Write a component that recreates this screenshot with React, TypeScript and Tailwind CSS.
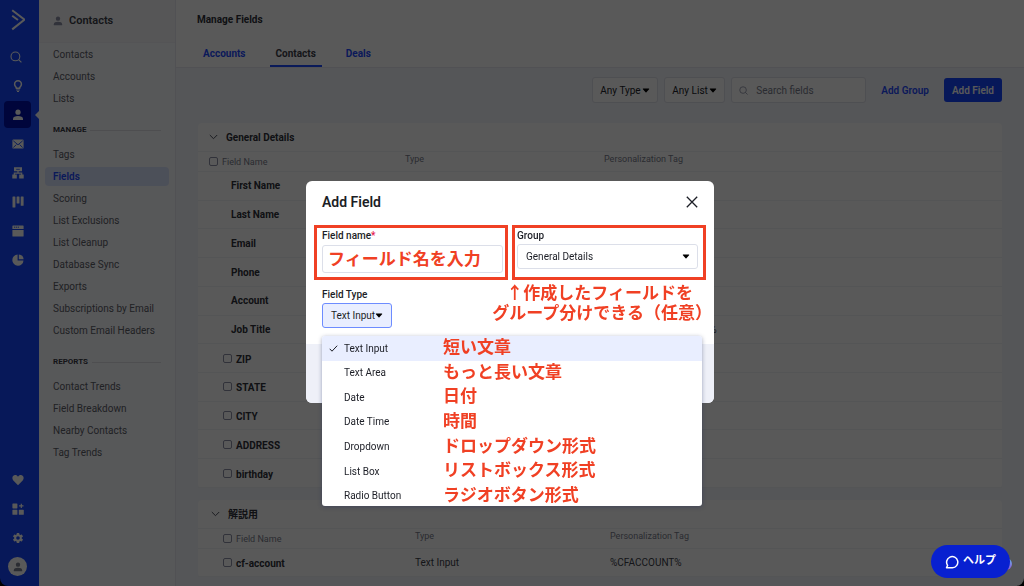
import React from 'react'

const NAV_TOP = ['Contacts', 'Accounts', 'Lists']
const NAV_MANAGE = [
  'Tags',
  'Fields',
  'Scoring',
  'List Exclusions',
  'List Cleanup',
  'Database Sync',
  'Exports',
  'Subscriptions by Email',
  'Custom Email Headers',
]
const NAV_REPORTS = ['Contact Trends', 'Field Breakdown', 'Nearby Contacts', 'Tag Trends']

const TABS = ['Accounts', 'Contacts', 'Deals']

type Field = { name: string; type?: string; tag?: string; fixed?: boolean }

const GENERAL_FIELDS: Field[] = [
  { name: 'First Name', fixed: true },
  { name: 'Last Name', fixed: true },
  { name: 'Email', fixed: true },
  { name: 'Phone', fixed: true },
  { name: 'Account', fixed: true },
  { name: 'Job Title', fixed: true, tag: '%CONTACT_JOB_TITLE%' },
  { name: 'ZIP' },
  { name: 'STATE' },
  { name: 'CITY' },
  { name: 'ADDRESS' },
  { name: 'birthday' },
]

const FIELD_TYPES = [
  { label: 'Text Input', note: '短い文章' },
  { label: 'Text Area', note: 'もっと長い文章' },
  { label: 'Date', note: '日付' },
  { label: 'Date Time', note: '時間' },
  { label: 'Dropdown', note: 'ドロップダウン形式' },
  { label: 'List Box', note: 'リストボックス形式' },
  { label: 'Radio Button', note: 'ラジオボタン形式' },
]

function PersonIcon({ className = 'size-3' }: { className?: string }) {
  return (
    <svg viewBox="0 0 12 12" className={className} fill="currentColor" aria-hidden>
      <circle cx="6" cy="3.2" r="2.6" />
      <path d="M1 11V9.8C1 7.9 3.2 7 6 7s5 .9 5 2.8V11z" />
    </svg>
  )
}

function SearchIcon({ className = 'size-3' }: { className?: string }) {
  return (
    <svg viewBox="0 0 12 12" className={className} fill="none" stroke="currentColor" strokeWidth="1.1" aria-hidden>
      <circle cx="5.4" cy="5.4" r="4.4" />
      <path d="M8.6 8.6 11.4 11.4" />
    </svg>
  )
}

function Caret({ className = '' }: { className?: string }) {
  return (
    <svg viewBox="0 0 8 5" className={`h-[5px] w-2 ${className}`} fill="currentColor" aria-hidden>
      <path d="M1.2.5h5.6a.4.4 0 0 1 .3.7L4.400 4.200a.6.6 0 0 1-.8 0L.9 1.200A.4.4 0 0 1 1.200.5z" />
    </svg>
  )
}

const RAIL_TOP = [
  { name: 'Search', icon: <SearchIcon className="mr-[3px] size-3" /> },
  {
    name: 'Ideas',
    icon: (
      <svg viewBox="0 0 12 12" className="size-3" fill="none" stroke="currentColor" aria-hidden>
        <path d="M4.4 8.2C4.4 7 2.6 6.4 2.6 4.200a3.400 3.400 0 0 1 6.800 0C9.400 6.400 7.600 7 7.600 8.200z" strokeWidth="1.500" />
        <path d="M4.200 10h3.600M5 11.500h2" strokeWidth="1.200" />
      </svg>
    ),
  },
  { name: 'Contacts', icon: <PersonIcon />, active: true },
  {
    name: 'Campaigns',
    icon: (
      <svg viewBox="0 0 12 12" className="size-3" aria-hidden>
        <rect x=".4" y="1.600" width="11.200" height="9" rx="1.200" fill="currentColor" />
        <path d="m1.300 2.800 4.700 4 4.700-4M1.300 9.600l3-3M10.700 9.600l-3-3" fill="none" stroke="#1446ff" strokeWidth=".9" />
      </svg>
    ),
  },
  {
    name: 'Automations',
    icon: (
      <svg viewBox="0 0 12 12" className="size-3" fill="currentColor" aria-hidden>
        <path d="M2 .3h8v4H6.600v1.300h3.700v2h1.400v3.900H7.200V7.600h1.900v-.9H2.900v.9h1.900v3.900H.3V7.600h1.400v-2h3.700V4.300H2z" />
        <path d="M4.200 2.300h3.600" stroke="#1446ff" strokeWidth=".8" />
      </svg>
    ),
  },
  {
    name: 'Deals',
    icon: (
      <svg viewBox="0 0 12 12" className="size-3" fill="currentColor" aria-hidden>
        <rect x=".5" y=".5" width="2.900" height="11" rx=".5" />
        <rect x="4.600" y=".5" width="2.900" height="7" rx=".5" />
        <rect x="8.700" y=".5" width="2.900" height="9.200" rx=".5" />
      </svg>
    ),
  },
  {
    name: 'Website',
    icon: (
      <svg viewBox="0 0 12 12" className="size-3" fill="currentColor" aria-hidden>
        <path d="M1 .4h10a.6.6 0 0 1 .6.6v3H.4V1A.6.6 0 0 1 1 .4zM.4 5h11.200v6a.6.6 0 0 1-.6.6H1a.6.6 0 0 1-.6-.6z" />
        <path d="M2 2.200h5" stroke="#1446ff" strokeWidth=".9" strokeDasharray="1.200 .7" />
      </svg>
    ),
  },
  {
    name: 'Reports',
    icon: (
      <svg viewBox="0 0 12 12" className="size-3" fill="currentColor" aria-hidden>
        <path d="M5.600.5v5.900h5.900A5.600 5.600 0 1 1 5.600.5z" />
        <path d="M6.800.4a5.200 5.200 0 0 1 4.800 4.800H6.800z" />
      </svg>
    ),
  },
]

const RAIL_BOTTOM = [
  {
    name: 'Favorites',
    icon: (
      <svg viewBox="0 0 12 12" className="size-3" fill="currentColor" aria-hidden>
        <path d="M6 11.200 1.300 6.500C-.6 4.300.6 1.100 3.200 1.100c1.200 0 2.200.6 2.800 1.600.6-1 1.600-1.600 2.800-1.600 2.600 0 3.800 3.200 1.900 5.400z" />
      </svg>
    ),
  },
  {
    name: 'Apps',
    icon: (
      <svg viewBox="0 0 12 12" className="size-3" fill="currentColor" aria-hidden>
        <rect x=".4" y=".4" width="5" height="5" rx=".6" />
        <rect x=".4" y="6.800" width="5" height="5" rx=".6" />
        <rect x="6.800" y="6.800" width="5" height="5" rx=".6" />
        <path d="M8.700.7h1.200v1.600h1.600v1.200H9.900v1.600H8.700V3.500H7.100V2.300h1.600z" />
      </svg>
    ),
  },
  {
    name: 'Settings',
    icon: (
      <svg viewBox="0 0 24 24" className="size-3" fill="currentColor" aria-hidden>
        <path d="M19.400 13a7.500 7.500 0 0 0 0-2l2.200-1.700a.5.500 0 0 0 .1-.6l-2-3.500a.5.500 0 0 0-.6-.2l-2.500 1a7.700 7.700 0 0 0-1.700-1L14.500 2.400A.5.500 0 0 0 14 2h-4a.5.500 0 0 0-.5.400L9.100 5a7.700 7.700 0 0 0-1.700 1l-2.500-1a.5.500 0 0 0-.6.200l-2 3.500a.5.500 0 0 0 .1.600L4.600 11a7.500 7.500 0 0 0 0 2l-2.200 1.700a.5.500 0 0 0-.1.600l2 3.500c.1.200.4.300.6.200l2.500-1a7.700 7.700 0 0 0 1.700 1l.4 2.600c0 .2.200.4.500.4h4c.3 0 .5-.2.500-.4l.4-2.600a7.700 7.700 0 0 0 1.700-1l2.500 1c.2.100.5 0 .6-.2l2-3.500a.5.500 0 0 0-.1-.6zM12 15.600a3.600 3.600 0 1 1 0-7.200 3.600 3.600 0 0 1 0 7.200z" />
      </svg>
    ),
  },
]

function Rail() {
  return (
    <nav aria-label="Main" className="flex w-[39px] shrink-0 flex-col items-center bg-[#1446ff] pr-1 pb-[5px] text-white">
      <a href="#" aria-label="Home" className="mt-2 mb-2.5 flex h-6 items-center">
        <svg viewBox="0 0 16 24" className="h-6 w-4" fill="none" stroke="currentColor" strokeWidth="2" aria-hidden>
          <path d="M2.200 2.200 14 11.200V12L2.200 21.400" />
          <path d="M2.200 7.800 8 12" strokeWidth="2" />
        </svg>
      </a>
      {RAIL_TOP.map((item) => (
        <a key={item.name} href="#" aria-label={item.name} className="relative flex h-[29px] w-[35px] items-center justify-center">
          <span className={`flex size-[27px] items-center justify-center rounded ${item.active ? 'bg-[#0010a8]' : ''}`}>
            {item.icon}
          </span>
          {item.active && (
            <svg viewBox="0 0 4 8" className="absolute -right-1 h-2 w-1 fill-[#f7f8fb]" aria-hidden>
              <path d="M4 0v8L0 4z" />
            </svg>
          )}
        </a>
      ))}
      <div className="mt-auto">
        {RAIL_BOTTOM.map((item) => (
          <a key={item.name} href="#" aria-label={item.name} className="flex h-[29px] items-center justify-center">
            {item.icon}
          </a>
        ))}
        <a href="#" aria-label="Profile" className="flex h-[29px] items-center justify-center">
          <span className="flex size-[19px] items-center justify-center rounded-full bg-white text-[#7c8093]">
            <PersonIcon className="size-2.5" />
          </span>
        </a>
      </div>
    </nav>
  )
}

function NavList({ items }: { items: string[] }) {
  return (
    <ul>
      {items.map((item) => (
        <li key={item} className="flex h-[22px] items-center px-1.5">
          <a
            href="#"
            className={`flex h-[19px] flex-1 items-center rounded-sm px-2 ${
              item === 'Fields' ? 'bg-[#dbe5ff] font-semibold text-[#1f4bff]' : 'text-[#5c6068]'
            }`}
          >
            {item}
          </a>
        </li>
      ))}
    </ul>
  )
}

function NavHeading({ children }: { children: React.ReactNode }) {
  return (
    <h3 className="flex h-[34px] items-center gap-1 px-3.5 pt-2 text-[8px] font-bold text-[#3a3d47]">
      {children}
      <span className="h-px flex-1 bg-[#dfe0e6]" />
    </h3>
  )
}

function Sidebar() {
  return (
    <aside className="w-[137px] shrink-0 border-r border-[#e8e9f0] bg-[#fafbff] text-[10px]">
      <h2 className="flex h-[43px] items-center gap-1.5 border-b border-[#f0f1f5] bg-[#f6f7fa] px-3.5 text-[11px] font-semibold text-[#3c3e48]">
        <PersonIcon className="size-2.5 text-[#8d90a5]" />
        Contacts
      </h2>
      <NavList items={NAV_TOP} />
      <NavHeading>MANAGE</NavHeading>
      <NavList items={NAV_MANAGE} />
      <NavHeading>REPORTS</NavHeading>
      <NavList items={NAV_REPORTS} />
    </aside>
  )
}

function FilterSelect({ label }: { label: string }) {
  return (
    <div className="relative flex items-center rounded-[3px] border border-[#dfe1ea] bg-white">
      <select aria-label={label} className="h-6 appearance-none pr-4 pl-[7px] text-[#22242b]">
        <option>{label}</option>
      </select>
      <Caret className="pointer-events-none absolute right-[7px] text-black" />
    </div>
  )
}

function Checkbox({ label }: { label: string }) {
  return (
    <input
      type="checkbox"
      aria-label={label}
      className="mb-0.5 size-[9px] shrink-0 appearance-none rounded-[2px] border border-[#8d90a5] bg-white"
    />
  )
}

type GroupProps = {
  title: string
  fields: Field[]
  inset?: boolean
  tableClass?: string
}

function FieldGroup({ title, fields, inset = false, tableClass = '' }: GroupProps) {
  return (
    <section className="rounded bg-white">
      <h3 className={`flex h-7 items-center gap-2 text-[10px] font-bold text-[#2f313a] ${inset ? 'pl-[13px]' : 'pl-[11px]'}`}>
        <svg viewBox="0 0 9 6" className="h-1.5 w-[9px]" fill="none" stroke="#4d505e" aria-hidden>
          <path d="m.8 1 3.700 3.700L8.200 1" />
        </svg>
        {title}
      </h3>
      <table className={`w-full table-fixed border-collapse text-left ${tableClass}`}>
        <thead>
          <tr className="h-5 border-y border-[#f1f2f6] text-[9px] text-[#7a7d8c]">
            <th className={`font-normal ${inset ? 'w-[217px] pl-[25px]' : 'w-[207px] pl-[11px]'}`}>
              <span className="flex items-center gap-1 pt-0.5">
                <Checkbox label={`Select all in ${title}`} />
                Field Name
              </span>
            </th>
            <th className={`pb-1 font-normal ${inset ? 'w-[195px]' : 'w-[199px]'}`}>Type</th>
            <th className="pb-1 font-normal">Personalization Tag</th>
          </tr>
        </thead>
        <tbody>
          {fields.map((f) => (
            <tr key={f.name} className="h-7 border-b border-[#f1f2f6] text-[#3c3e48]">
              <td className={`font-bold text-[#2f313a] ${f.fixed ? 'pl-[33px]' : 'pt-0.5 pl-[25px]'}`}>
                <span className="flex items-center gap-1">
                  {!f.fixed && <Checkbox label={f.name} />}
                  {f.name}
                </span>
              </td>
              <td>{f.type}</td>
              <td>{f.tag}</td>
            </tr>
          ))}
        </tbody>
      </table>
    </section>
  )
}

function ManageFields() {
  return (
    <main className="min-w-0 flex-1 bg-[#f4f5fb] text-[10px]">
      <header className="border-b border-[#e8e9f0] bg-white px-[21px] pt-3">
        <h1 className="text-[10px] leading-4 font-bold text-[#2f313a]">Manage Fields</h1>
        <nav aria-label="Field kinds" className="mt-3 flex gap-[18px]">
          {TABS.map((tab) => (
            <a
              key={tab}
              href="#"
              className={`flex h-[27px] items-center border-b-2 px-1.5 pt-0.5 font-bold ${
                tab === 'Contacts' ? 'border-[#1f4bff] text-[#3c3e48]' : 'border-transparent text-[#1f4bff]'
              }`}
            >
              {tab}
            </a>
          ))}
        </nav>
      </header>

      <div className="flex flex-col gap-3 px-[22px] pt-[9px]">
        <div className="mb-2 flex items-center justify-end">
          <div className="flex gap-1.5">
            <FilterSelect label="Any Type" />
            <FilterSelect label="Any List" />
            <label className="flex h-[26px] w-[135px] items-center gap-2 rounded-[3px] border border-[#dfe1ea] bg-white px-[7px]">
              <SearchIcon className="size-[9px] shrink-0 text-[#8d90a5]" />
              <input
                type="search"
                aria-label="Search fields"
                placeholder="Search fields"
                className="w-full min-w-0 bg-transparent placeholder:text-[#7a7d8c]"
              />
            </label>
          </div>
          <button type="button" className="px-[15px] font-semibold text-[#1f4bff]">
            Add Group
          </button>
          <button type="button" className="h-6 rounded-[3px] bg-[#1446ff] px-2 font-semibold text-white">
            Add Field
          </button>
        </div>
        <FieldGroup title="General Details" fields={GENERAL_FIELDS} tableClass="h-[337px]" />
        <FieldGroup
          title="解説用"
          inset
          fields={[{ name: 'cf-account', type: 'Text Input', tag: '%CFACCOUNT%' }]}
        />
      </div>
    </main>
  )
}

function AddFieldDialog() {
  return (
    <div
      role="dialog"
      aria-label="Add Field"
      className="w-[408px] rounded-md bg-white text-[10px] text-[#1c1e26]"
    >
      <div className="flex h-11 items-center justify-between px-4 pb-0.5">
        <h2 className="text-sm font-semibold">Add Field</h2>
        <button type="button" aria-label="Close">
          <svg viewBox="0 0 12 12" className="size-3" fill="none" stroke="currentColor" strokeWidth="1.300" aria-hidden>
            <path d="m.8.8 10.400 10.400M11.200.8.8 11.200" />
          </svg>
        </button>
      </div>

      <div className="flex gap-1 px-2">
        <div className="h-[55px] flex-1 border-[3px] border-[#f04024] pt-0.5 pr-0.5 pl-[5px]">
          <label htmlFor="field-name" className="block leading-3 font-medium">
            Field name<span className="text-[#e5184f]">*</span>
          </label>
          <input
            id="field-name"
            defaultValue="フィールド名を入力"
            className="mt-[3px] h-7 w-full rounded-[3px] border border-[#dcdfe9] px-[5px] pb-1 text-[17px] font-bold text-[#f04024]"
          />
        </div>
        <div className="h-[55px] flex-1 border-[3px] border-[#f04024] pt-0.5 pr-[5px] pl-0.5">
          <label htmlFor="field-group" className="block leading-3 font-medium">
            Group
          </label>
          <div className="relative mt-0.5 flex items-center">
            <select id="field-group" className="h-[25px] w-full appearance-none rounded-[3px] border border-[#dcdfe9] px-2">
              <option>General Details</option>
            </select>
            <Caret className="pointer-events-none absolute right-2 text-black" />
          </div>
        </div>
      </div>

      <div className="flex h-16 justify-between pl-4">
        <div className="relative pt-[7px]">
          <span id="field-type-label" className="block leading-4 font-medium">
            Field Type
          </span>
          <button
            type="button"
            aria-haspopup="listbox"
            aria-expanded="true"
            aria-labelledby="field-type-label"
            className="flex h-[25px] items-center rounded-[3px] border border-[#6d8cff] bg-[#e9eeff] px-2"
          >
            Text Input
            <Caret className="text-black" />
          </button>
          <div className="absolute top-14 left-0 h-[170px] w-[380px] overflow-hidden rounded-[3px] bg-white shadow-[0_1px_4px_rgba(30,40,90,0.4)]">
            <ul role="listbox" aria-labelledby="field-type-label" className="grid h-[172px] grid-rows-7">
              {FIELD_TYPES.map((t, i) => (
                <li
                  key={t.label}
                  role="option"
                  aria-selected={i === 0}
                  className={`flex items-center ${i === 0 ? 'bg-[#e9eeff]' : ''}`}
                >
                  <span className="flex w-[22px] justify-center">
                    {i === 0 && (
                      <svg viewBox="0 0 9 7" className="h-[7px] w-[9px]" fill="none" stroke="currentColor" aria-hidden>
                        <path d="m.7 3.800 2.300 2.400L8.200.7" />
                      </svg>
                    )}
                  </span>
                  <span className="w-[99px]">{t.label}</span>
                  <span className="pb-0.5 text-[17px] leading-5 font-bold text-[#f04024]">{t.note}</span>
                </li>
              ))}
            </ul>
          </div>
        </div>
        <p className="pt-[3px] pr-0.5 text-[17px] leading-5 font-bold whitespace-nowrap text-[#f04024]">
          <span className="block pl-3.5">↑作成したフィールドを</span>
          <span className="block">グループ分けできる（任意）</span>
        </p>
      </div>

      <div className="h-[59px] rounded-b-md bg-[#eef0f8]" />
    </div>
  )
}

export default function App() {
  return (
    <div className="h-screen overflow-hidden bg-black font-['Roboto','Noto_Sans_CJK_JP',sans-serif]">
      <div className="flex h-full overflow-hidden rounded-b-lg">
        <Rail />
        <Sidebar />
        <ManageFields />
      </div>

      <div className="fixed inset-0 flex items-start justify-center bg-black/65 pt-[181px] pr-1">
        <AddFieldDialog />
      </div>

      <div className="fixed right-3.5 bottom-2">
        <span className="absolute -right-0.5 bottom-2 size-3 rounded-full bg-linear-to-b from-[#4fb4e8] to-[#8b4fd8]" />
        <button
          type="button"
          className="relative flex h-[33px] w-[79px] items-center justify-center gap-1 rounded-full bg-[#0820d0] text-[11px] font-bold text-white"
        >
          <svg viewBox="0 0 14 14" className="size-3.5" fill="none" stroke="currentColor" strokeWidth="1.500" aria-hidden>
            <path d="M1.500 12.800 2.600 10.400A5.600 5.600 0 1 1 7.400 12.800z" strokeLinejoin="round" />
          </svg>
          ヘルプ
        </button>
      </div>
    </div>
  )
}
